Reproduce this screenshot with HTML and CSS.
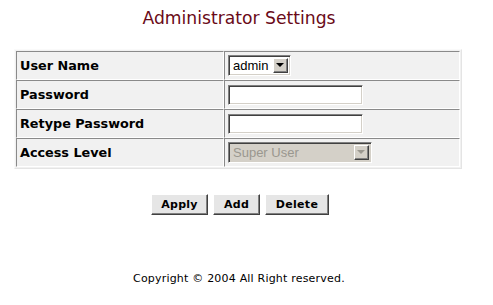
FILE: index.html
```html
<!DOCTYPE html>
<html>
<head>
<meta charset="utf-8">
<link rel="stylesheet" href="styles.css">
</head>
<body>
<div class="page">
  <h1 class="title">Administrator Settings</h1>
  <table class="settings">
    <tr>
      <th>User Name</th>
      <td>
        <div class="select select-user">
          <span class="select-text">admin</span>
          <span class="select-btn"><span class="tri"></span></span>
        </div>
      </td>
    </tr>
    <tr>
      <th>Password</th>
      <td><div class="textbox"></div></td>
    </tr>
    <tr>
      <th>Retype Password</th>
      <td><div class="textbox"></div></td>
    </tr>
    <tr>
      <th>Access Level</th>
      <td>
        <div class="select select-level disabled">
          <span class="select-text">Super User</span>
          <span class="select-btn"><span class="tri"></span></span>
        </div>
      </td>
    </tr>
  </table>
  <div class="buttons">
    <button class="btn btn-apply">Apply</button>
    <button class="btn btn-add">Add</button>
    <button class="btn btn-delete">Delete</button>
  </div>
  <p class="copyright">Copyright © 2004 All Right reserved.</p>
</div>
</body>
</html>
```
FILE: styles.css
```css
html, body {
  margin: 0;
  padding: 0;
  background: #ffffff;
}

.page {
  width: 493px;
  font-family: "DejaVu Sans", Verdana, sans-serif;
}

.title {
  margin: 0;
  padding-top: 7px;
  padding-right: 15px;
  height: 49px;
  box-sizing: border-box;
  text-align: center;
  font-size: 17.2px;
  line-height: 22px;
  font-weight: normal;
  color: #6a0a18;
}

.settings {
  margin-left: 14px;
  width: 448px;
  border-collapse: separate;
  border-spacing: 0;
  border: 1px solid #fafafa;
  border-right-color: #e4e4e4;
  border-bottom-color: #e4e4e4;
  background: #f1f1f1;
  padding: 1px;
}

.settings th,
.settings td {
  height: 27px;
  padding: 0 3px;
  border-top: 1px solid #8a8a8a;
  border-left: 1px solid #8a8a8a;
  border-bottom: 1px solid #ffffff;
  border-right: 1px solid #ffffff;
  vertical-align: middle;
  background: #f1f1f1;
}

.settings th {
  width: 200px;
  text-align: left;
  font-size: 12.8px;
  font-weight: bold;
  color: #000;
}

.select {
  display: flex;
  box-sizing: border-box;
  height: 21px;
  border-top: 1px solid #808080;
  border-left: 1px solid #808080;
  border-bottom: 1px solid #ffffff;
  border-right: 1px solid #ffffff;
  box-shadow: inset 1px 1px 0 #404040, inset -1px -1px 0 #d4d0c8;
  background: #ffffff;
}

.select-user { width: 63px; }
.select-level { width: 144px; }

.select-text {
  flex: 1;
  padding: 2px 0 0 4px;
  font-family: "Liberation Sans", Arial, sans-serif;
  font-size: 13px;
  line-height: 15px;
  color: #000;
}

.select-btn {
  width: 15px;
  height: 15px;
  margin: 2px 2px 0 0;
  box-sizing: border-box;
  background: #d4d0c8;
  border-top: 1px solid #ffffff;
  border-left: 1px solid #ffffff;
  border-bottom: 1px solid #404040;
  border-right: 1px solid #404040;
  box-shadow: inset -1px -1px 0 #808080;
  display: flex;
  align-items: center;
  justify-content: center;
}

.tri {
  width: 0;
  height: 0;
  border-left: 4px solid transparent;
  border-right: 4px solid transparent;
  border-top: 4px solid #000;
  margin: 0 1px 1px 0;
}

.disabled { background: #d4d0c8; }
.disabled .select-text { color: #9a978f; }
.disabled .tri { border-top-color: #9a978f; }

.textbox {
  box-sizing: border-box;
  width: 135px;
  height: 20px;
  background: #ffffff;
  border-top: 1px solid #808080;
  border-left: 1px solid #808080;
  border-bottom: 1px solid #ffffff;
  border-right: 1px solid #ffffff;
  box-shadow: inset 1px 1px 0 #404040, inset -1px -1px 0 #d4d0c8;
}

.buttons {
  display: flex;
  justify-content: flex-start;
  gap: 5px;
  margin-top: 25px;
  padding-left: 151px;
}

.btn {
  box-sizing: border-box;
  height: 21px;
  padding: 0;
  font-family: "DejaVu Sans", Verdana, sans-serif;
  font-size: 11px;
  font-weight: bold;
  color: #000;
  background: #e6e6e6;
  border-top: 1px solid #ffffff;
  border-left: 1px solid #ffffff;
  border-bottom: 1px solid #404040;
  border-right: 1px solid #404040;
  box-shadow: inset -1px -1px 0 #808080;
  letter-spacing: 0.3px;
}

.btn-apply { width: 57px; }
.btn-add { width: 47px; }
.btn-delete { width: 64px; }

.copyright {
  margin: 0;
  margin-top: 57px;
  padding-left: 133px;
  font-size: 11px;
  line-height: 14px;
  letter-spacing: 0.2px;
  color: #000;
}
```
